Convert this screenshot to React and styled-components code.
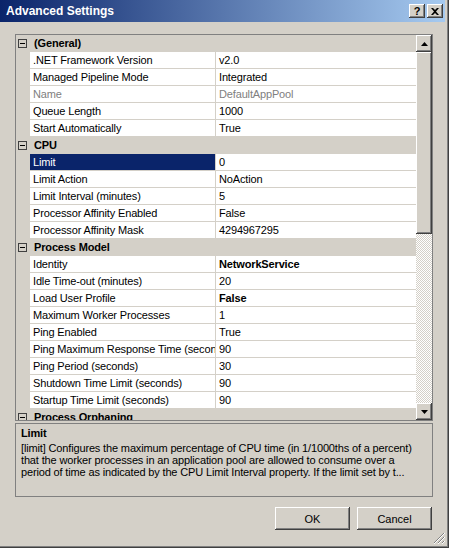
import React from "react";
import styled, { createGlobalStyle } from "styled-components";

const GlobalStyle = createGlobalStyle`
  html, body { margin: 0; padding: 0; background: #d4d0c8; }
  body { font-family: Tahoma, "Liberation Sans", Arial, sans-serif; font-size: 11px; }
`;

const sections = [
  {
    title: "(General)",
    rows: [
      { name: ".NET Framework Version", value: "v2.0" },
      { name: "Managed Pipeline Mode", value: "Integrated" },
      { name: "Name", value: "DefaultAppPool", disabled: true },
      { name: "Queue Length", value: "1000" },
      { name: "Start Automatically", value: "True" },
    ],
  },
  {
    title: "CPU",
    rows: [
      { name: "Limit", value: "0", selected: true },
      { name: "Limit Action", value: "NoAction" },
      { name: "Limit Interval (minutes)", value: "5" },
      { name: "Processor Affinity Enabled", value: "False" },
      { name: "Processor Affinity Mask", value: "4294967295" },
    ],
  },
  {
    title: "Process Model",
    rows: [
      { name: "Identity", value: "NetworkService", bold: true },
      { name: "Idle Time-out (minutes)", value: "20" },
      { name: "Load User Profile", value: "False", bold: true },
      { name: "Maximum Worker Processes", value: "1" },
      { name: "Ping Enabled", value: "True" },
      { name: "Ping Maximum Response Time (seconds)", value: "90" },
      { name: "Ping Period (seconds)", value: "30" },
      { name: "Shutdown Time Limit (seconds)", value: "90" },
      { name: "Startup Time Limit (seconds)", value: "90" },
    ],
  },
  { title: "Process Orphaning", rows: [] },
];

const descLines = [
  "[limit] Configures the maximum percentage of CPU time (in 1/1000ths of a percent)",
  "that the worker processes in an application pool are allowed to consume over a",
  "period of time as indicated by the CPU Limit Interval property. If the limit set by t...",
];

const raised = `
  box-shadow: inset -1px -1px #404040, inset 1px 1px #ffffff,
    inset -2px -2px #808080, inset 2px 2px #d4d0c8;
`;

const App = () => {
  return (
    <>
      <GlobalStyle />
      <Window>
        <TitleBar>
          <Title>Advanced Settings</Title>
          <CaptionButtons>
            <CaptionButton>?</CaptionButton>
            <CaptionButton>
              <svg width="8" height="7" viewBox="0 0 8 7">
                <path d="M0 0h2l2 2 2-2h2L5 3.5 8 7H6L4 5 2 7H0l3-3.5z" fill="#000" />
              </svg>
            </CaptionButton>
          </CaptionButtons>
        </TitleBar>
        <Body>
          <Grid>
            <Rows>
              {sections.map((s) => (
                <React.Fragment key={s.title}>
                  <CategoryRow>
                    <Expander>
                      <span />
                    </Expander>
                    <CategoryName>{s.title}</CategoryName>
                  </CategoryRow>
                  {s.rows.map((r) => (
                    <PropRow key={r.name}>
                      <Margin />
                      <NameCell $selected={r.selected} $disabled={r.disabled}>
                        {r.name}
                      </NameCell>
                      <ValueCell $bold={r.bold} $disabled={r.disabled}>
                        {r.value}
                      </ValueCell>
                    </PropRow>
                  ))}
                </React.Fragment>
              ))}
            </Rows>
            <ScrollBar>
              <ArrowButton>
                <svg width="7" height="4" viewBox="0 0 7 4">
                  <path d="M3.5 0L7 4H0z" fill="#000" />
                </svg>
              </ArrowButton>
              <Thumb />
              <Track />
              <ArrowButton>
                <svg width="7" height="4" viewBox="0 0 7 4">
                  <path d="M0 0h7L3.5 4z" fill="#000" />
                </svg>
              </ArrowButton>
            </ScrollBar>
          </Grid>
          <Description>
            <DescTitle>Limit</DescTitle>
            {descLines.map((l) => (
              <DescLine key={l}>{l}</DescLine>
            ))}
          </Description>
          <Footer>
            <Button>OK</Button>
            <Button>Cancel</Button>
          </Footer>
        </Body>
        <Grip>
          <svg width="12" height="12" viewBox="0 0 12 12">
            <path d="M11 1L1 11M11 5L5 11M11 9L9 11" stroke="#808080" strokeWidth="1" />
            <path d="M12 1L1 12M12 5L5 12M12 9L9 12" stroke="#ffffff" strokeWidth="1" />
          </svg>
        </Grip>
      </Window>
    </>
  );
};

const Window = styled.div`
  position: relative;
  width: 449px;
  height: 548px;
  box-sizing: border-box;
  padding: 0 4px 4px 0;
  background: #d4d0c8;
  box-shadow: inset -1px -1px #404040, inset -2px -2px #808080;
  display: flex;
  flex-direction: column;
  overflow: hidden;
`;

const TitleBar = styled.div`
  height: 22px;
  flex: none;
  display: flex;
  align-items: center;
  justify-content: space-between;
  padding: 0 2px 0 6px;
  background: linear-gradient(to right, #0a246a, #a6caf0);
`;

const Title = styled.div`
  color: #fff;
  font-weight: bold;
  font-size: 12px;
`;

const CaptionButtons = styled.div`
  display: flex;
  gap: 2px;
`;

const CaptionButton = styled.div`
  width: 16px;
  height: 14px;
  background: #d4d0c8;
  ${raised}
  display: flex;
  align-items: center;
  justify-content: center;
  font-weight: bold;
  font-size: 11px;
  color: #000;
  line-height: 14px;
`;

const Body = styled.div`
  flex: 1;
  display: flex;
  flex-direction: column;
  padding: 12px 12px 0 15px;
`;

const Grid = styled.div`
  display: flex;
  width: 418px;
  height: 387px;
  box-sizing: border-box;
  border: 1px solid #808080;
  background: #d4d0c8;
`;

const Rows = styled.div`
  width: 400px;
  overflow: hidden;
`;

const rowBase = `
  display: flex;
  height: 16px;
  border-bottom: 1px solid #d4d0c8;
  line-height: 16px;
  font-family: Tahoma, "Liberation Sans", Arial, sans-serif;
  font-size: 11px;
  letter-spacing: -0.15px;
  white-space: nowrap;
`;

const CategoryRow = styled.div`
  ${rowBase}
  background: #d4d0c8;
  align-items: center;
`;

const Expander = styled.div`
  width: 9px;
  height: 9px;
  box-sizing: border-box;
  margin: 0 7px 0 2px;
  border: 1px solid #404040;
  display: flex;
  align-items: center;
  justify-content: center;

  span {
    width: 5px;
    height: 1px;
    background: #000;
  }
`;

const CategoryName = styled.div`
  font-weight: bold;
  color: #000;
`;

const PropRow = styled.div`
  ${rowBase}
  background: #fff;
`;

const Margin = styled.div`
  width: 14px;
  flex: none;
  background: #d4d0c8;
`;

const NameCell = styled.div`
  width: 186px;
  flex: none;
  box-sizing: border-box;
  padding-left: 3px;
  overflow: hidden;
  border-right: 1px solid #d4d0c8;
  background: ${(p) => (p.$selected ? "#0a246a" : "#fff")};
  color: ${(p) => (p.$selected ? "#fff" : p.$disabled ? "#808080" : "#000")};
`;

const ValueCell = styled.div`
  flex: 1;
  padding-left: 3px;
  overflow: hidden;
  font-weight: ${(p) => (p.$bold ? "bold" : "normal")};
  color: ${(p) => (p.$disabled ? "#808080" : "#000")};
`;

const ScrollBar = styled.div`
  width: 16px;
  display: flex;
  flex-direction: column;
`;

const ArrowButton = styled.div`
  height: 17px;
  flex: none;
  background: #d4d0c8;
  ${raised}
  display: flex;
  align-items: center;
  justify-content: center;
`;

const Thumb = styled.div`
  height: 182px;
  flex: none;
  background: #d4d0c8;
  ${raised}
`;

const Track = styled.div`
  flex: 1;
  background-color: #d4d0c8;
  background-image: conic-gradient(#fff 25%, #d4d0c8 0 50%, #fff 0 75%, #d4d0c8 0);
  background-size: 2px 2px;
`;

const Description = styled.div`
  margin-top: 2px;
  width: 418px;
  height: 74px;
  box-sizing: border-box;
  border: 1px solid #808080;
  padding: 3px 5px;
  color: #000;
  line-height: 12px;
  letter-spacing: -0.15px;
`;

const DescTitle = styled.div`
  font-weight: bold;
  margin-bottom: 3px;
`;

const DescLine = styled.div`
  white-space: nowrap;
`;

const Footer = styled.div`
  display: flex;
  justify-content: flex-end;
  gap: 7px;
  margin-top: 10px;
  padding-right: 1px;
`;

const Button = styled.div`
  width: 75px;
  height: 23px;
  background: #d4d0c8;
  ${raised}
  display: flex;
  align-items: center;
  justify-content: center;
  color: #000;
`;

const Grip = styled.div`
  position: absolute;
  right: 4px;
  bottom: 4px;
  width: 12px;
  height: 12px;
  line-height: 0;
`;

export default App;
